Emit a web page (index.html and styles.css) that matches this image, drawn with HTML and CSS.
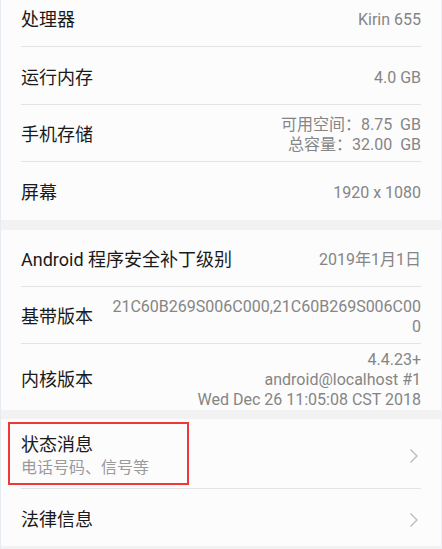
FILE: index.html
```html
<!DOCTYPE html>
<html>
    <head>
        <meta charset="utf-8">
        <title>关于手机</title>
        <link rel="stylesheet" href="styles.css">
    </head>
    <body>
        <div class="page">
            <div class="card card-first">
                <div class="row row-short">
                    <span class="label">处理器</span>
                    <span class="value">Kirin 655</span>
                </div>
                <div class="row">
                    <span class="label">运行内存</span>
                    <span class="value">4.0 GB</span>
                </div>
                <div class="row row-short">
                    <span class="label">手机存储</span>
                    <span class="value">可用空间：8.75&nbsp; GB<br>总容量：32.00&nbsp; GB</span>
                </div>
                <div class="row row-last">
                    <span class="label">屏幕</span>
                    <span class="value">1920 x 1080</span>
                </div>
            </div>
            <div class="card">
                <div class="row">
                    <span class="label">Android 程序安全补丁级别</span>
                    <span class="value">2019年1月1日</span>
                </div>
                <div class="row">
                    <span class="label">基带版本</span>
                    <span class="value">21C60B269S006C000,21C60B269S006C00<br>0</span>
                </div>
                <div class="row row-last row-tall">
                    <span class="label">内核版本</span>
                    <span class="value">4.4.23+<br>android@localhost #1<br>Wed Dec 26 11:05:08 CST 2018</span>
                </div>
            </div>
            <div class="card">
                <div class="row row-link row-status">
                    <div class="titles">
                        <span class="label">状态消息</span>
                        <span class="sub">电话号码、信号等</span>
                    </div>
                    <svg class="chevron" width="10" height="16" viewBox="0 0 10 16"><path d="M1.5 1.5 L8 8 L1.5 14.5" fill="none" stroke="#bdbdbd" stroke-width="1.4"/></svg>
                    <div class="mark"></div>
                </div>
                <div class="row row-link row-last">
                    <span class="label">法律信息</span>
                    <svg class="chevron" width="10" height="16" viewBox="0 0 10 16"><path d="M1.5 1.5 L8 8 L1.5 14.5" fill="none" stroke="#bdbdbd" stroke-width="1.4"/></svg>
                </div>
            </div>
        </div>
    </body>
</html>
```
FILE: styles.css
```css
* {
    margin: 0;
    padding: 0;
    box-sizing: border-box;
}
body {
    background: #f2f2f2;
    font-family: Roboto, "Noto Sans CJK SC", sans-serif;
    overflow: hidden;
}
.page {
    width: 442px;
    height: 549px;
    border-left: 1px solid #e6ebf2;
    border-right: 1px solid #eef0f3;
    background: #f2f2f2;
    overflow: hidden;
}
.card {
    background: #fcfcfc;
    margin-bottom: 10px;
}
.card + .card {
    margin-bottom: 9px;
}
.card-first {
    margin-top: -10px;
}
.row {
    display: flex;
    align-items: center;
    justify-content: space-between;
    min-height: 57px;
    margin: 0 20px;
    padding-top: 4px;
    border-bottom: 1px solid #e3e3e3;
    position: relative;
}
.card-first .row {
    min-height: 58px;
}
.card-first .row-short {
    min-height: 57px;
}
.row-last {
    border-bottom: none;
}
.row-tall {
    min-height: 65px;
    padding: 6px 0 0;
}
.label {
    font-size: 18px;
    color: #1a1a1a;
    line-height: 24px;
    white-space: nowrap;
}
.value {
    font-size: 16px;
    color: #858585;
    line-height: 20px;
    text-align: right;
    white-space: nowrap;
}
.row-status {
    min-height: 70px;
}
.titles {
    display: flex;
    flex-direction: column;
}
.sub {
    font-size: 16px;
    color: #9a9a9a;
    line-height: 22px;
}
.chevron {
    margin-right: 2px;
}
.mark {
    position: absolute;
    left: -13px;
    top: 3px;
    width: 181px;
    height: 63px;
    border: 2px solid #f0383a;
}
```
